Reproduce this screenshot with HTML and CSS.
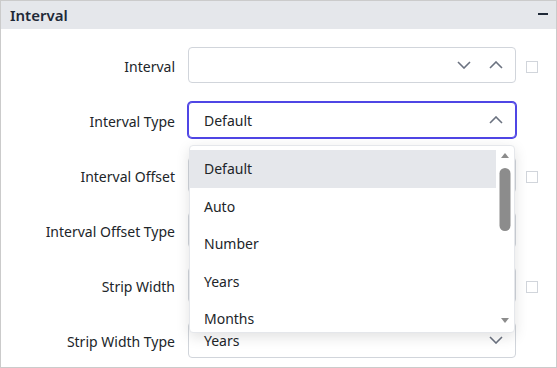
FILE: index.html
```html
<!DOCTYPE html>
<html lang="en">
<head>
    <meta charset="UTF-8">
    <title>Interval</title>
    <link rel="stylesheet" href="styles.css">
</head>
<body>

<div class="panel">
    <div class="panel-header">
        <span>Interval</span>
        <span class="collapse"></span>
    </div>

    <div class="panel-body">
        <div class="row">
            <label>Interval</label>
            <div class="field">
                <span class="value"></span>
                <svg class="chevron" viewBox="0 0 14 8"><path d="M1 1l6 6 6-6"/></svg>
                <svg class="chevron" viewBox="0 0 14 8"><path d="M1 7l6-6 6 6"/></svg>
            </div>
            <span class="check"></span>
        </div>

        <div class="row">
            <label>Interval Type</label>
            <div class="field focused">
                <span class="value">Default</span>
                <svg class="chevron" viewBox="0 0 14 8"><path d="M1 7l6-6 6 6"/></svg>
            </div>
        </div>

        <div class="row">
            <label>Interval Offset</label>
            <div class="field"><span class="value"></span></div>
            <span class="check"></span>
        </div>

        <div class="row">
            <label>Interval Offset Type</label>
            <div class="field"><span class="value"></span></div>
        </div>

        <div class="row">
            <label>Strip Width</label>
            <div class="field"><span class="value"></span></div>
            <span class="check"></span>
        </div>

        <div class="row">
            <label>Strip Width Type</label>
            <div class="field">
                <span class="value">Years</span>
                <svg class="chevron" viewBox="0 0 14 8"><path d="M1 1l6 6 6-6"/></svg>
            </div>
        </div>

        <!-- dropdown of Interval Type -->
        <div class="popup">
            <ul class="options">
                <li class="active">Default</li>
                <li>Auto</li>
                <li>Number</li>
                <li>Years</li>
                <li>Months</li>
            </ul>
            <svg class="scrollbar" viewBox="0 0 18 186">
                <path d="M5 12l4-5 4 5z"/>
                <rect x="3.5" y="22" width="11" height="63" rx="5.5"/>
                <path d="M5 172l4 5 4-5z"/>
            </svg>
        </div>
    </div>
</div>

</body>
</html>
```

FILE: styles.css
```css
* {
    box-sizing: border-box;
    margin: 0;
    padding: 0;
}

body {
    font-family: "Noto Sans", "Open Sans", sans-serif;
    font-size: 14px;
    color: #212529;
    background-color: #fff;
}

.panel {
    height: 368px;
    border: 1px solid #cbcbcb;
    display: flex;
    flex-direction: column;
    overflow: hidden;
}

.panel-header {
    flex-shrink: 0;
    height: 28px;
    background-color: #e5e7eb;
    display: flex;
    align-items: center;
    justify-content: space-between;
    padding: 0 8px 0 9px;
    font-size: 15px;
    font-weight: 600;
    color: #1f2937;
}

.collapse {
    width: 10px;
    height: 2px;
    margin-top: -2px;
    background-color: #1f2937;
}

.panel-body {
    position: relative;
    flex: 1;
    padding-top: 18px;
}

.row {
    display: flex;
    align-items: center;
    height: 36px;
    margin-bottom: 19px;
}

.row:last-of-type {
    margin-bottom: 0;
}

.row label {
    width: 174px;
    text-align: right;
    padding-top: 2px;
}

.field {
    width: 328px;
    height: 36px;
    margin-left: 13px;
    display: flex;
    align-items: center;
    gap: 18px;
    padding: 0 12px 0 15px;
    border: 1px solid #d1d5db;
    border-radius: 4px;
    background-color: #fff;
}

.field.focused {
    border-color: #4f46e5;
    box-shadow: 0 0 0 1px #4f46e5;
}

.value {
    flex: 1;
}

.chevron {
    width: 14px;
    height: 8px;
    fill: none;
    stroke: #6b7280;
    stroke-width: 1.6;
}

.check {
    width: 12px;
    height: 12px;
    margin: 3px 0 0 10px;
    border: 1px solid #d1d5db;
}

.popup {
    position: absolute;
    top: 116px;
    left: 188px;
    width: 326px;
    height: 188px;
    display: flex;
    background-color: #fff;
    border: 1px solid #e5e7eb;
    border-radius: 4px;
    box-shadow: 0 4px 14px rgba(0, 0, 0, 0.12);
    overflow: hidden;
}

.options {
    flex: 1;
    list-style: none;
    padding-top: 4px;
}

.options li {
    height: 37.5px;
    line-height: 37.5px;
    padding-left: 14px;
}

.options li.active {
    background-color: #e5e7eb;
}

.scrollbar {
    width: 18px;
    height: 186px;
    flex-shrink: 0;
    fill: #8c8c8c;
}
```
